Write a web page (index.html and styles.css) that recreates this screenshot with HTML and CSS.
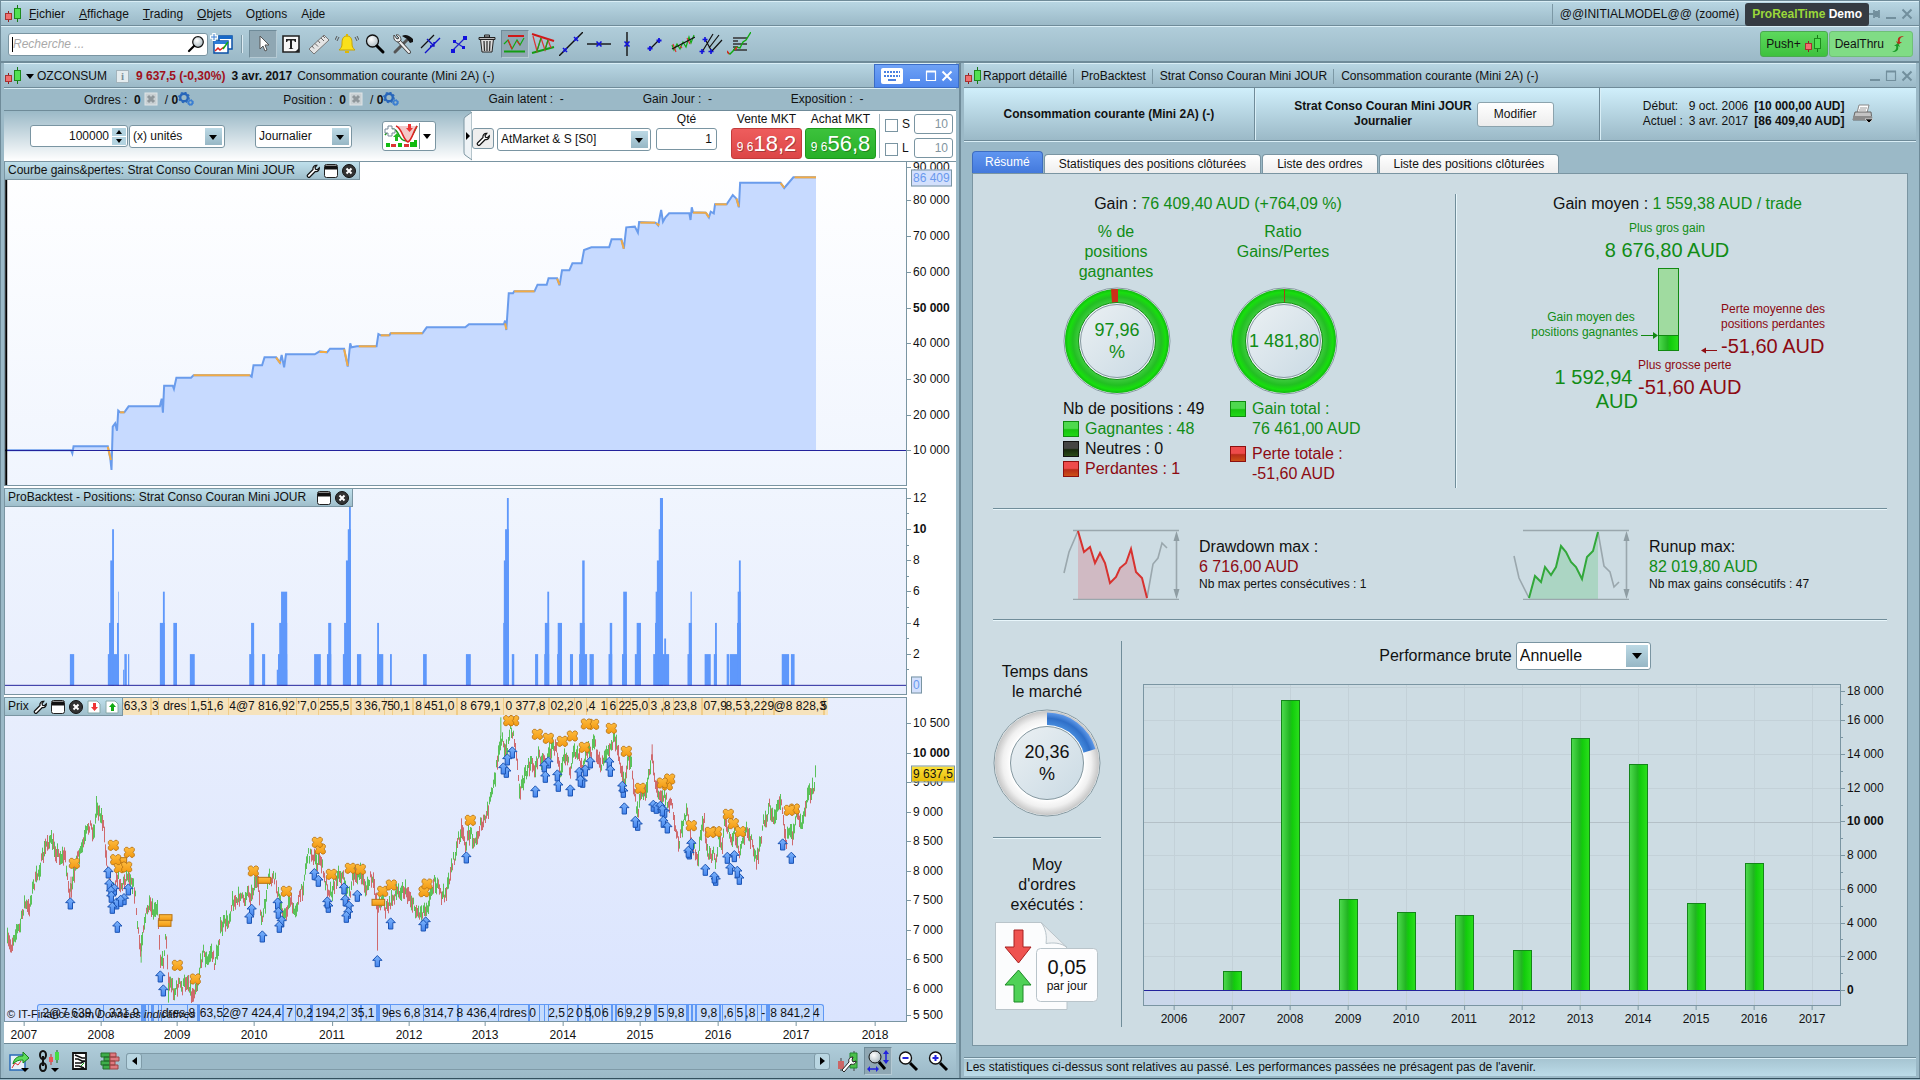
FILE: index.html
```html
<!DOCTYPE html>
<html lang="fr">
<head>
<meta charset="utf-8">
<title>ProRealTime Demo</title>
<link rel="stylesheet" href="styles.css">
</head>
<body>
<svg class="defs" aria-hidden="true">
  <defs>
    <linearGradient id="gBlue" x1="0" y1="0" x2="0" y2="1"><stop offset="0" stop-color="#7db4fb"/><stop offset="1" stop-color="#4484ee"/></linearGradient>
    <linearGradient id="gOrange" x1="0" y1="0" x2="0" y2="1"><stop offset="0" stop-color="#fdbb3f"/><stop offset="1" stop-color="#f39a12"/></linearGradient>
    <linearGradient id="gBar" x1="0" y1="0" x2="1" y2="0"><stop offset="0" stop-color="#4fdb4f"/><stop offset="0.45" stop-color="#22b522"/><stop offset="0.6" stop-color="#12cc0c"/><stop offset="1" stop-color="#2be01c"/></linearGradient>
    <radialGradient id="gRing" gradientUnits="userSpaceOnUse" cx="54" cy="54" r="52"><stop offset="0.7" stop-color="#48d048"/><stop offset="0.85" stop-color="#22bf22"/><stop offset="0.94" stop-color="#17df0d"/><stop offset="1" stop-color="#12b812"/></radialGradient>
    <radialGradient id="gRingW" gradientUnits="userSpaceOnUse" cx="54" cy="54" r="52"><stop offset="0.7" stop-color="#ffffff"/><stop offset="0.85" stop-color="#f0f0f0"/><stop offset="1" stop-color="#c6c6c6"/></radialGradient>
    <radialGradient id="gRingB" gradientUnits="userSpaceOnUse" cx="54" cy="54" r="52"><stop offset="0.7" stop-color="#4a90e0"/><stop offset="0.86" stop-color="#2f6fc8"/><stop offset="1" stop-color="#6ea6f2"/></radialGradient>
    <linearGradient id="gHole" x1="0" y1="0" x2="1" y2="1"><stop offset="0.15" stop-color="#e6edf1"/><stop offset="0.9" stop-color="#cddce5"/></linearGradient>
    <radialGradient id="gLens" cx="0.4" cy="0.35" r="0.7"><stop offset="0" stop-color="#fff"/><stop offset="1" stop-color="#a9b8bf"/></radialGradient>
    <symbol id="i-candles" viewBox="0 0 18 18"><path d="M4.500 6v11" stroke="#8d2020"/><rect x="1.500" y="8.500" width="6" height="6" fill="#f07070" stroke="#a83232"/><path d="M13.500 0v17" stroke="#167a16"/><rect x="10.500" y="3.500" width="6" height="10" fill="#52e052" stroke="#1d8a1d"/></symbol>
    <symbol id="i-wrench" viewBox="0 0 14 14"><path d="M1.500 11 7 5.500C6.500 3 8.500 1 10.800 1.300L9 3.500l.5 1.800 1.900.4 1.900-1.900c.3 2.600-1.700 4.200-4 3.700L3.600 13.200c-1.300.8-3-.9-2.100-2.200z" fill="#fff" stroke="#111" stroke-width="1.200"/></symbol>
    <symbol id="i-win" viewBox="0 0 14 14"><rect x=".5" y=".5" width="13" height="13" rx="2" fill="#fff" stroke="#222"/><path d="M1 1.500h12v4H1z" fill="#111"/></symbol>
    <symbol id="i-close" viewBox="0 0 14 14"><circle cx="7" cy="7" r="6.500" fill="#333" stroke="#111"/><path d="m4.500 4.500 5 5m0-5-5 5" stroke="#fff" stroke-width="2"/></symbol>
    <symbol id="i-greybox" viewBox="0 0 14 14"><rect x="1" y="1" width="12" height="12" fill="#c9d0d3" stroke="#dfe5e7"/><path d="m4 4 6 6m0-6-6 6" stroke="#8f979b" stroke-width="3"/></symbol>
    <symbol id="i-gears" viewBox="0 0 16 14"><circle cx="6" cy="5.500" r="3.800" fill="none" stroke="#2866ba" stroke-width="2.400"/><circle cx="6" cy="5.500" r="5.200" fill="none" stroke="#2866ba" stroke-width="1.300" stroke-dasharray="2 2.080"/><circle cx="12.500" cy="10.500" r="2" fill="none" stroke="#3c7fd2" stroke-width="1.700"/><circle cx="12.500" cy="10.500" r="3" fill="none" stroke="#3c7fd2" stroke-dasharray="1.200 1.150"/></symbol>
    <symbol id="i-min" viewBox="0 0 12 12"><path d="M1 10h10" stroke="currentColor" stroke-width="2"/></symbol>
    <symbol id="i-max" viewBox="0 0 12 12"><path d="M1.500 1.500h9v9h-9z" fill="none" stroke="currentColor" stroke-width="1.200"/><path d="M1 1.500h10" stroke="currentColor" stroke-width="2"/></symbol>
    <symbol id="i-x" viewBox="0 0 12 12"><path d="m1.500 1.500 9 9m0-9-9 9" stroke="currentColor" stroke-width="2"/></symbol>
    <symbol id="i-loupe" viewBox="0 0 24 24"><circle cx="9.500" cy="9" r="6" fill="url(#gLens)" stroke="#111" stroke-width="1.300"/><path d="m14 14 6 6" stroke="#000" stroke-width="3" stroke-linecap="round"/></symbol>
    <symbol id="m-arrow" viewBox="0 0 31 37" overflow="visible"><path d="M15.500 1.500 29.500 16H22v19H9V16H1.500z" fill="url(#gBlue)" stroke="#1d55b4" stroke-width="3"/></symbol>
    <symbol id="m-cross" viewBox="0 0 32 32" overflow="visible"><path d="M5 1h6l5 5 5-5h6l4 4v6l-4 5 4 5v6l-4 4h-6l-5-5-5 5H5l-4-4v-6l4-5-4-5V5z" fill="url(#gOrange)" stroke="#b87414" stroke-width="2.500"/></symbol>
  </defs>
</svg>

<header class="app-head">
  <div class="menubar">
    <svg class="logo"><use href="#i-candles"/></svg>
    <nav class="menus">
      <a href="#"><u>F</u>ichier</a><a href="#"><u>A</u>ffichage</a><a href="#"><u>T</u>rading</a><a href="#"><u>O</u>bjets</a><a href="#">O<u>p</u>tions</a><a href="#">A<u>i</u>de</a>
    </nav>
    <span class="model">@@INITIALMODEL@@ (zoomé)</span>
    <span class="brand"><b class="lime">ProRealTime</b> <b>Demo</b></span>
    <span class="winbtns dim">
      <button aria-label="Épingler"><svg viewBox="0 0 12 12"><path d="M0 6h5M5 2v8M6 4h3M6 8h3M6 5h3v2H6zM10 2v8" stroke="currentColor" stroke-width="1.800"/></svg></button>
      <button aria-label="Réduire"><svg><use href="#i-min"/></svg></button>
      <button aria-label="Fermer"><svg><use href="#i-x"/></svg></button>
    </span>
  </div>
  <div class="toolbar">
    <label class="search"><input type="text" placeholder="Recherche ..." aria-label="Recherche"><svg viewBox="0 0 18 18"><circle cx="11" cy="7" r="5.300" fill="url(#gLens)" stroke="#111" stroke-width="1.200"/><path d="m7 11-5 5" stroke="#000" stroke-width="2.200" stroke-linecap="round"/></svg></label>
    <button class="tool" aria-label="Nouvelle fenêtre"><svg viewBox="0 0 24 24"><path d="M9 4h13v13H9z" fill="#fff" stroke="#0a50a8" stroke-width="1.500"/><path d="M9 4h13v3H9z" fill="#1769c8"/><path d="M4 9h14v12H4z" fill="#fff" stroke="#0a50a8" stroke-width="1.500"/><path d="M4 9h14v3H4z" fill="#2b7bd8"/><path d="m5 19 3-3 2 2 4-3" stroke="#d22" fill="none" stroke-width="1.500"/><path d="m13 17 5-7" stroke="#1a1" stroke-width="1.500"/><path d="M4 1v8M0 5h8" stroke="#fff" stroke-width="3.500"/><path d="M4 2v6M1 5h6" stroke="#3b7fd0" stroke-width="1"/></svg></button>
    <span class="vsep"></span>
    <button class="tool on" aria-label="Sélection"><svg viewBox="0 0 24 24"><path d="M9 4v13l3-3 2 5 2-1-2-5h4z" fill="#fff" stroke="#555"/></svg></button>
    <button class="tool" aria-label="Texte"><svg viewBox="0 0 24 24"><path d="M4 4h16v16H4z" fill="#f6f6f6" stroke="#222" stroke-width="1.600"/><path d="M7 7h10v3h-1l-1-1.500h-2V16l1.500 1h-5l1.500-1V8.500H9L8 10H7zM16 20l4-4v4z" fill="#222"/></svg></button>
    <button class="tool" aria-label="Règle"><svg viewBox="0 0 24 24"><path d="m2 17 15-14 5 5L7 22z" fill="#e4e4e4" stroke="#777"/><path d="m5 14 2 2.500m1-5 3 3m0-6 2 2.500m1-5 3 3m-1-5 2 2" stroke="#666"/></svg></button>
    <button class="tool" aria-label="Alerte"><svg viewBox="0 0 24 24"><path d="M12 4c-5 0-5 5-5 8s-1 4-3 6h16c-2-2-3-3-3-6s0-8-5-8z" fill="#fae01c" stroke="#c9a400"/><path d="M10 19h4v2h-4zM11 2h2v2h-2z" fill="#e0b800"/><path d="M4 5 2 9m20 0-2-4M2 4 0 8m24 0-2-4" stroke="#555" fill="none"/></svg></button>
    <button class="tool" aria-label="Zoom"><svg><use href="#i-loupe"/></svg></button>
    <button class="tool" aria-label="Outils"><svg viewBox="0 0 24 24"><path d="m4 20 12-12" stroke="#555" stroke-width="3" stroke-linecap="round"/><path d="M11 4c3-2 7-1 11 3v3l-3 1-3-4z" fill="#111"/><path d="m7 8 11 12" stroke="#444" stroke-width="4" stroke-linecap="round"/><path d="m7 8 11 12" stroke="#eee" stroke-width="2.200" stroke-linecap="round"/><path d="M3 3c-1 4 1 7 5 7l2-2c0-4-3-6-5-5l3 3-2 1z" fill="#eee" stroke="#444"/></svg></button>
    <button class="tool" aria-label="Canal"><svg viewBox="0 0 24 24"><path d="M2 16 15 3" stroke="#111" stroke-width="1.200"/><path d="M6 21 21 6M8 7l7 7m0-4v4h-4" stroke="#11c" stroke-width="1.400" fill="none"/></svg></button>
    <button class="tool" aria-label="Droite"><svg viewBox="0 0 24 24"><path d="M6 18 18 6M8 10l8 5" stroke="#22c" stroke-width="1.200"/><path d="M4 17h4v4H4zM16 4h4v4h-4zM6 8h3v3H6zM15 14h3v3h-3z" fill="#11d"/></svg></button>
    <button class="tool" aria-label="Supprimer"><svg viewBox="0 0 24 24"><path d="M5.500 7h13l-1.500 13H7z" fill="#ddd" stroke="#222"/><path d="M4 5.500h16v2H4zM9.500 3h5v2h-5z" fill="#bbb" stroke="#222"/><path d="m9 9 .5 10M12 9v10m3-10-.5 10" stroke="#333" stroke-width="1.300"/></svg></button>
    <button class="tool on" aria-label="Supports"><svg viewBox="0 0 24 24"><path d="M5 4h16" stroke="#d01818" stroke-width="2"/><path d="M1 19.500h21" stroke="#139c13" stroke-width="2"/><path d="m1 12 4-4 4 9 5-9 3 5 4-7" fill="none" stroke="#1a1" stroke-width="1.200"/><path d="m5 8 4 9m5-8 3 4" stroke="#d22" stroke-width="1.200"/></svg></button>
    <button class="tool" aria-label="Triangle"><svg viewBox="0 0 24 24"><path d="m1 2 22 7" stroke="#d01818" stroke-width="2"/><path d="m1 21 22-6" stroke="#139c13" stroke-width="2"/><path d="m2 4 4 15 4-13 4 12 3-10 3 8" fill="none" stroke="#d33" stroke-width="1.200"/><path d="m6 19 4-13m4 12 3-10" stroke="#1a1" stroke-width="1.200"/></svg></button>
    <button class="tool" aria-label="Tendance"><svg viewBox="0 0 24 24"><path d="M0 24 24 0" stroke="#111" stroke-width="1.400"/><path d="m4 16 4 4m0-4-4 4M15 5l4 4m0-4-4 4" stroke="#11d" stroke-width="1.600"/></svg></button>
    <button class="tool" aria-label="Horizontale"><svg viewBox="0 0 24 24"><path d="M0 12h24" stroke="#111" stroke-width="1.400"/><path d="m9.500 9.500 5 5m0-5-5 5" stroke="#11d" stroke-width="1.600"/></svg></button>
    <button class="tool" aria-label="Verticale"><svg viewBox="0 0 24 24"><path d="M12 0v24" stroke="#111" stroke-width="1.400"/><path d="m9.500 9.500 5 5m0-5-5 5" stroke="#11d" stroke-width="1.600"/></svg></button>
    <button class="tool" aria-label="Segment"><svg viewBox="0 0 24 24"><path d="m7 17 9-9" stroke="#111" stroke-width="1.300"/><path d="M7 14v5m-2.500-2.500h5M16 6v5m-2.500-2.500h5" stroke="#11d" stroke-width="1.800"/></svg></button>
    <button class="tool" aria-label="Régression"><svg viewBox="0 0 24 24"><path d="m1 13 2 5 3-6 3 5 3-7 3 5 3-10 2 6 3-8" fill="none" stroke="#1a1" stroke-width="1.200"/><path d="m2 12 3 8m4-6 2 2m5-10 3 6" stroke="#d33" stroke-width="1.200"/><path d="M1 17 24 5" stroke="#111" stroke-width="1.200"/></svg></button>
    <button class="tool" aria-label="Fourchette"><svg viewBox="0 0 24 24"><path d="M3 20 14 2M10 16 20 3m-8 17L23 8M6 7l6 11" stroke="#111" stroke-width="1.200"/><path d="M6 5v5M3.500 7.500h5M3 17v5M.500 19.500h5m6.500-2.500v5m-2.500-2.500h5" stroke="#11d" stroke-width="1.600"/></svg></button>
    <button class="tool" aria-label="Fibonacci"><svg viewBox="0 0 24 24"><path d="M6 6h14M6 9h5M6 12h14M6 15h5M6 18h14" stroke="#333" stroke-width="1.500"/><path d="m0 20 3 2 3-3 3-4 4 1 3-6 3-2 5-8" fill="none" stroke="#1a1" stroke-width="1.400"/><path d="m0 19 2 3m6-4 2-3" stroke="#d22" stroke-width="1.400"/></svg></button>
    <span class="fill"></span>
    <button class="push">Push+ <svg class="c18"><use href="#i-candles"/></svg></button>
    <button class="push thru">DealThru <svg class="c18" viewBox="0 0 18 18"><path d="M15 1c-5 0-7 2-6 6L7 6l2 4 4-3-2 0c-1-3 1-5 4-6z" fill="#b5301c"/><path d="M3 17c5 0 7-2 6-6l2 1-2-4-4 3 2 0c1 3-1 5-4 6z" fill="#1a9a2a"/></svg></button>
  </div>
</header>

<main class="desk">
  <section class="panel">
    <div class="titlebar">
      <svg class="logo"><use href="#i-candles"/></svg>
      <span class="tri"></span>
      <span class="sym">OZCONSUM</span>
      <span class="info">i</span>
      <b class="loss">9 637,5 (-0,30%)</b>
      <b>3 avr. 2017</b>
      <span class="fill">Consommation courante (Mini 2A) (-)</span>
      <span class="winbtns blue">
        <button aria-label="Clavier" class="kbd"><svg viewBox="0 0 22 16"><rect width="22" height="16" rx="2" fill="#fff"/><path d="M3 4h16M3 8h16" stroke="#4a80e0" stroke-width="2" stroke-dasharray="2 1"/><path d="M7 12h8" stroke="#4a80e0" stroke-width="2"/></svg></button>
        <button aria-label="Réduire"><svg><use href="#i-min"/></svg></button>
        <button aria-label="Agrandir"><svg><use href="#i-max"/></svg></button>
        <button aria-label="Fermer"><svg><use href="#i-x"/></svg></button>
      </span>
    </div>
    <div class="status">
      <span>Ordres : &nbsp;<b>0</b> <svg class="c14"><use href="#i-greybox"/></svg> &nbsp;/ <b>0</b><svg class="c16"><use href="#i-gears"/></svg></span>
      <span>Position : &nbsp;<b>0</b> <svg class="c14"><use href="#i-greybox"/></svg> &nbsp;/ <b>0</b><svg class="c16"><use href="#i-gears"/></svg></span>
      <span>Gain latent : &nbsp;-</span>
      <span>Gain Jour : &nbsp;-</span>
      <span>Exposition : &nbsp;-</span>
    </div>
    <div class="controls">
      <div class="left-ctl">
        <span class="spin"><input class="box num" value="100000" aria-label="Nombre d'unités"><i class="up"></i><i class="down"></i></span>
        <span class="pick w95"><select aria-label="Unité"><option>(x) unités</option></select></span>
        <span class="pick w96"><select aria-label="Période"><option>Journalier</option></select></span>
        <button class="indic" aria-label="Indicateurs"><svg viewBox="0 0 36 26"><path d="M2 12c6-8 10-8 14 0s10 10 18-9" fill="none" stroke="#1c9c1c" stroke-width="1.500"/><path d="M13 3c6 2 7 14 12 16 4-2 5-10 9-16" fill="#f3c9c9" stroke="#d22" stroke-width="1.500"/><path d="M3 20h4v4H3zM15 20h4v4h-4zM27 19h4v5h-4zM31 17h3v7h-3z" fill="#1b1"/><path d="M8 21h5v3H8zM21 21h5v3h-5z" fill="#d33"/><path d="M25 1h3v4h2l-3.500 4L23 5h2z" fill="#e33"/><path d="m14 10 3 4h-2v4h-3v-4h-2z" fill="#2b2"/><path d="M2 6h3V3h4v3h3v4H9v3H5v-3H2z" fill="#fff" stroke="#789"/></svg><span class="tri"></span></button>
      </div>
      <div class="order">
        <svg class="notch" viewBox="0 0 9 50" preserveAspectRatio="none"><path d="M9 1 2 6q-1 1-1 3v32q0 2 1 3l7 5z" fill="#eef3f6" stroke="#7d96a2"/><path d="m3 21 4 4-4 4z"/></svg>
        <button class="sq" aria-label="Réglages"><svg class="c14"><use href="#i-wrench"/></svg></button>
        <span class="pick w154"><select aria-label="Type d'ordre"><option>AtMarket &amp; S [S0]</option></select></span>
        <label class="col qty">Qté<input class="box num" value="1"></label>
        <span class="col">Vente MKT<button class="mkt sell"><small>9 6</small>18,2</button></span>
        <span class="col">Achat MKT<button class="mkt buy"><small>9 6</small>56,8</button></span>
        <div class="sl">
          <label><input type="checkbox">S</label><input class="box num" value="10" aria-label="Stop">
          <label><input type="checkbox">L</label><input class="box num" value="10" aria-label="Limite">
        </div>
      </div>
    </div>
    <div class="charts">
      <div class="chart equity">
        <div class="plot"><svg class="area" viewBox="8 -54 1472 969" preserveAspectRatio="none" id="equity"></svg>
          <div class="tag"><span>Courbe gains&amp;pertes: Strat Conso Couran Mini JOUR</span><svg class="c14"><use href="#i-wrench"/></svg><svg class="c14"><use href="#i-win"/></svg><svg class="c14"><use href="#i-close"/></svg></div>
        </div>
        <div class="axis" id="axisEquity"></div>
      </div>
      <div class="chart pos">
        <div class="plot"><svg class="area" viewBox="8 27 1472 615" preserveAspectRatio="none" id="positions"></svg>
          <div class="tag"><span>ProBacktest - Positions: Strat Conso Couran Mini JOUR</span><svg class="c14"><use href="#i-win"/></svg><svg class="c14"><use href="#i-close"/></svg></div>
        </div>
        <div class="axis" id="axisPos"></div>
      </div>
      <div class="chart price">
        <div class="plot"><svg class="area" viewBox="15 24 2703 969" preserveAspectRatio="none" id="price"></svg>
          <div class="strip top" id="stripTop"></div>
          <div class="strip bottom" id="stripBottom"></div>
          <div class="tag">Prix<svg class="c14"><use href="#i-wrench"/></svg><svg class="c14"><use href="#i-win"/></svg><svg class="c14"><use href="#i-close"/></svg><svg class="c14" viewBox="0 0 14 14"><path d="M1 1h9l3 3v9H1z" fill="#fff" stroke="#8aa"/><path d="M6 3h3v4h2l-3.500 4L4 7h2z" fill="#e33"/></svg><svg class="c14" viewBox="0 0 14 14"><path d="M1 1h9l3 3v9H1z" fill="#fff" stroke="#8aa"/><path d="M6 11h3V7h2L7.500 3 4 7h2z" fill="#1a1"/></svg></div>
          <div class="copy">© IT-Finance.com <i>Données indicatives</i></div>
        </div>
        <div class="axis" id="axisPrice"></div>
      </div>
      <div class="years" id="years"></div>
    </div>
    <div class="footbar">
      <button class="tool" aria-label="Partager"><svg viewBox="0 0 24 24"><path d="M3 6h15v15H3z" fill="#e9f2fb" stroke="#2a6bb8" stroke-width="1.500"/><path d="m5 19 3-5 3 2 3-4" stroke="#d33" fill="none"/><path d="M6 15c1-6 5-8 10-8V3l6 6-6 5v-3c-5 0-7 1-10 4z" fill="#5ddc5d" stroke="#178017"/><path d="m14 19 8 0-4 4z"/></svg></button>
      <button class="tool" aria-label="Lier"><svg viewBox="0 0 24 24"><ellipse cx="6" cy="6" rx="3" ry="4" fill="none" stroke="#111" stroke-width="2"/><ellipse cx="6" cy="18" rx="3" ry="4" fill="none" stroke="#111" stroke-width="2"/><path d="M6 7v10" stroke="#111" stroke-width="2"/><path d="M14 5v11" stroke="#b33"/><path d="M12 8h4v5h-4z" fill="#e55"/><path d="M20 1v13" stroke="#161"/><path d="M18 3h4v8h-4z" fill="#4d4"/><path d="M14 19h8l-4 4z"/></svg></button>
      <button class="tool" aria-label="Liste"><svg viewBox="0 0 24 24"><path d="M6 4h13v16H6z" fill="#fff" stroke="#111" stroke-width="1.800"/><path d="m8 6 7 3h3M8 10h3l4 2h3M8 14h6l4-2M8 17h4l5 2" stroke="#111" stroke-width="1.600" fill="none"/><path d="m14 17 3-3" stroke="#1a1"/></svg></button>
      <button class="tool" aria-label="Carnet"><svg viewBox="0 0 24 24"><path d="M4 4h9v4H4zM7 8h6v4H7zM4 12h9v4H4zM6 16h7v4H6z" fill="#3fae4a" stroke="#216e2b"/><path d="M13 4h6v4h-6zM13 8h9v4h-9zM13 12h5v4h-5zM13 16h8v4h-8z" fill="#e07a80" stroke="#944"/></svg></button>
      <div class="scroll"><button aria-label="Gauche"><span class="tri l"></span></button><button aria-label="Droite"><span class="tri r"></span></button></div>
      <button class="tool" aria-label="Style"><svg viewBox="0 0 24 24"><path d="M5 9v13M18 2v20" stroke="#444"/><path d="M2 12h6v8H2z" fill="#c66"/><path d="M14 4h7v15h-7z" fill="#4bc04b" stroke="#283"/><path d="m6 21 7-8c-1-3 1-5 4-5l-1 3 1 2 3-1c0 3-3 4-5 3l-7 8z" fill="#fff" stroke="#222"/></svg></button>
      <button class="tool on" aria-label="Zoom auto"><svg viewBox="0 0 24 24"><circle cx="9" cy="8" r="6" fill="url(#gLens)" stroke="#111"/><path d="m13 13 6 7" stroke="#000" stroke-width="3"/><path d="M20 4v9M3 20h7" stroke="#22d" stroke-width="1.500"/><path d="m17 5 3-4 3 4zm0 6 3 4 3-4zM4 17l-3 3 3 3zm6 0 3 3-3 3z" fill="#22d"/></svg></button>
      <button class="tool" aria-label="Zoom arrière"><svg viewBox="0 0 24 24"><circle cx="9.500" cy="9" r="6" fill="#fff" stroke="#111" stroke-width="1.400"/><path d="m14 14 7 7" stroke="#000" stroke-width="3"/><path d="M6.500 9h6" stroke="#22d" stroke-width="2"/></svg></button>
      <button class="tool" aria-label="Zoom avant"><svg viewBox="0 0 24 24"><circle cx="9.500" cy="9" r="6" fill="#fff" stroke="#111" stroke-width="1.400"/><path d="m14 14 7 7" stroke="#000" stroke-width="3"/><path d="M6.500 9h6M9.500 6v6" stroke="#22d" stroke-width="2"/></svg></button>
    </div>
  </section>

  <section class="panel">
    <div class="titlebar">
      <svg class="logo"><use href="#i-candles"/></svg>
      <span class="crumb">Rapport détaillé</span><span class="crumb">ProBacktest</span><span class="crumb">Strat Conso Couran Mini JOUR</span><span class="crumb fill">Consommation courante (Mini 2A) (-)</span>
      <span class="winbtns dim">
        <button aria-label="Réduire"><svg><use href="#i-min"/></svg></button>
        <button aria-label="Agrandir"><svg><use href="#i-max"/></svg></button>
        <button aria-label="Fermer"><svg><use href="#i-x"/></svg></button>
      </span>
    </div>
    <div class="summary">
      <div><b>Consommation courante (Mini 2A) (-)</b></div>
      <div><b class="mid">Strat Conso Couran Mini JOUR<br>Journalier</b><button class="modify">Modifier</button></div>
      <div><span class="dates"><span>Début:</span><span>9 oct. 2006</span><b>[10 000,00 AUD]</b><span>Actuel :</span><span>3 avr. 2017</span><b>[86 409,40 AUD]</b></span>
        <svg class="printer" viewBox="0 0 22 20"><path d="M7 1h10l-2 8H5z" fill="#fff" stroke="#888"/><path d="M8 4h7M7 6h7" stroke="#999"/><path d="M3 8h16l1 8H1z" fill="#c4c4c4" stroke="#666"/><path d="M1 12h19v4H1z" fill="#8c8c8c"/><path d="m13 15 8 0-4 4z" stroke="#fff" stroke-width=".6"/></svg></div>
    </div>
    <div class="tabs"><button class="sel">Résumé</button><button>Statistiques des positions clôturées</button><button>Liste des ordres</button><button>Liste des positions clôturées</button></div>
    <div class="report">
      <div class="sec gains">
        <div class="gl">
          <p class="lead">Gain : <span class="g">76 409,40 AUD (+764,09 %)</span></p>
          <div class="rings">
            <div>
              <p class="ttl g">% de<br>positions<br>gagnantes</p>
              <div class="ring"><svg viewBox="0 0 108 108"><circle cx="54" cy="54" r="53" fill="#eef4f6" stroke="#84979f"/><circle cx="54" cy="54" r="52" fill="url(#gRing)"/><path d="M48 2.300A52 52 0 0 1 55 2v14h-6z" fill="#cc2f1a"/><circle cx="54" cy="54" r="38.500" fill="#eef4f6" stroke="#148f14"/><circle cx="54" cy="54" r="36.500" fill="url(#gHole)" stroke="#84979f"/></svg><span class="g">97,96<br>%</span></div>
              <ul><li>Nb de positions : 49</li><li class="g"><i class="sw gr"></i>Gagnantes : 48</li><li><i class="sw bk"></i>Neutres : 0</li><li class="r"><i class="sw rd"></i>Perdantes : 1</li></ul>
            </div>
            <div>
              <p class="ttl g">Ratio<br>Gains/Pertes</p>
              <div class="ring"><svg viewBox="0 0 108 108"><circle cx="54" cy="54" r="53" fill="#eef4f6" stroke="#84979f"/><circle cx="54" cy="54" r="52" fill="url(#gRing)"/><path d="M54.500 2v14" stroke="#a8401a"/><circle cx="54" cy="54" r="38.500" fill="#eef4f6" stroke="#148f14"/><circle cx="54" cy="54" r="36.500" fill="url(#gHole)" stroke="#84979f"/></svg><span class="g">1 481,80</span></div>
              <ul class="two"><li class="g"><i class="sw gr"></i>Gain total :<br>76 461,00 AUD</li><li class="r"><i class="sw rd"></i>Perte totale :<br>-51,60 AUD</li></ul>
            </div>
          </div>
        </div>
        <div class="gr-col">
          <p class="lead">Gain moyen : <span class="g">1 559,38 AUD / trade</span></p>
          <div class="avg">
            <p class="best g">Plus gros gain<strong>8 676,80 AUD</strong></p>
            <div class="win g">Gain moyen des&nbsp;<br>positions gagnantes<strong>1 592,94&nbsp;<br>AUD</strong></div>
            <svg class="arr" viewBox="0 0 20 83"><path d="M3 67.500h13" stroke="#118811"/><path d="m15 64 5 3.500-5 3.500z" fill="#118811"/></svg>
            <svg class="gauge" viewBox="0 0 21 83"><rect x=".5" y=".5" width="20" height="82" fill="#a0dba0" stroke="#118a11"/><rect x=".5" y="67.500" width="20" height="15" fill="url(#gBar)" stroke="#118a11"/></svg>
            <svg class="arr2" viewBox="0 0 42 83"><path d="M24 82.500h14" stroke="#8f0f14"/><path d="m27 79.500-5 3 5 3z" fill="#8f0f14"/></svg>
            <div class="lose r">Perte moyenne des<br>positions perdantes<strong>-51,60 AUD</strong></div>
            <div class="worst r">Plus grosse perte<strong>-51,60 AUD</strong></div>
          </div>
        </div>
      </div>
      <div class="sec extremes">
        <div class="ext"><svg viewBox="0 0 118 72"><path d="M15 3 21 24 27 19 32 35 37 25 42 35 47 55 53 49 57 40 63 35 68 21 73 44 79 50 84 70V72H15z" fill="#d23" fill-opacity=".18"/><path d="M10 2.500h106M10 71.500h106M113.500 10v52" stroke="#9aa7ad" stroke-width="1.600"/><path d="m113.500 3 3 10h-6zm0 68 3-10h-6z" fill="#8f9da3"/><path d="M1 45 6 24 15 3M84 70l6-34 5-6 4-15 5 5" fill="none" stroke="#9aa7ad" stroke-width="1.600"/><path d="M15 3 21 24 27 19 32 35 37 25 42 35 47 55 53 49 57 40 63 35 68 21 73 44 79 50 84 70" fill="none" stroke="#d8322f" stroke-width="2"/></svg>
          <p>Drawdown max :<br><span class="r">6 716,00 AUD</span><small>Nb max pertes consécutives : 1</small></p></div>
        <div class="ext"><svg viewBox="0 0 118 72"><path d="M16 70 22 48 28 54 32 39 38 47 43 39 48 18 53 24 58 34 63 39 69 51 74 29 80 23 85 4V72H16z" fill="#2b4" fill-opacity=".2"/><path d="M10 2.500h106M10 71.500h106M113.500 10v52" stroke="#9aa7ad" stroke-width="1.600"/><path d="m113.500 3 3 10h-6zm0 68 3-10h-6z" fill="#8f9da3"/><path d="m1 28 5 22 10 20M85 4l6 34 6 6 4 15 5-5" fill="none" stroke="#9aa7ad" stroke-width="1.600"/><path d="M16 70 22 48 28 54 32 39 38 47 43 39 48 18 53 24 58 34 63 39 69 51 74 29 80 23 85 4" fill="none" stroke="#32a83a" stroke-width="2"/></svg>
          <p>Runup max:<br><span class="g">82 019,80 AUD</span><small>Nb max gains consécutifs : 47</small></p></div>
      </div>
      <div class="perf">
        <aside>
          <p>Temps dans&nbsp;<br>le marché</p>
          <div class="ring"><svg viewBox="0 0 108 108"><circle cx="54" cy="54" r="53" fill="#eef4f6" stroke="#84979f"/><circle cx="54" cy="54" r="52" fill="url(#gRingW)"/><path d="M54 3.500A50.500 50.500 0 0 1 102.500 40L91 43.500 54 54z" fill="url(#gRingB)"/><circle cx="54" cy="54" r="38" fill="#fff"/><circle cx="54" cy="54" r="36.500" fill="url(#gHole)" stroke="#84979f"/></svg><span>20,36<br>%</span></div>
          <hr>
          <p>Moy<br>d'ordres<br>exécutés :</p>
          <div class="daily"><svg viewBox="0 0 104 88"><path d="M.5.500H46L72 26v61.500H.5z" fill="#fbfcfd" stroke="#b9c4ca"/><path d="M46 .500c5 6 6 14 5 21 7-1 15-1 21 4z" fill="#eef1f3" stroke="#b9c4ca"/><path d="M19 8h9v17h8L23.500 41 10 25h9z" fill="#ef5350" stroke="#a82020"/><path d="M19 80h9V63h8L23.500 48 10 63h9z" fill="#4fd157" stroke="#1d8a26"/><rect x="41.500" y="26.500" width="61" height="53" rx="4" fill="#fdfdfe" stroke="#b9c4ca"/></svg><span>0,05<small>par jour</small></span></div>
        </aside>
        <div class="perf-main">
          <div class="perf-head"><label for="perf">Performance brute</label><span class="pick big"><select id="perf"><option>Annuelle</option></select></span></div>
          <div class="perf-chart">
            <div class="plot2"><svg class="area" viewBox="1144 685 696 320" preserveAspectRatio="none" id="perfBars"></svg></div>
            <div class="axis" id="axisPerf"></div>
            <div class="years" id="yearsPerf"></div>
          </div>
        </div>
      </div>
    </div>
    <div class="note">Les statistiques ci-dessus sont relatives au passé. Les performances passées ne présagent pas de l'avenir.</div>
  </section>
</main>
<footer class="edge"></footer>
<script src="charts.js"></script>
</body>
</html>
```
FILE: styles.css
```css
* { box-sizing: border-box; }
body { margin: 0; min-height: 100vh; display: flex; flex-direction: column; background: #9bb9c7; color: #111; font: 12px/15px "Liberation Sans", Arial, sans-serif; }
button, input, select { font: inherit; color: inherit; margin: 0; }
button { padding: 0; border: 0; background: none; }
p, ul { margin: 0; padding: 0; list-style: none; }
a { color: inherit; text-decoration: none; }
svg { display: block; flex: none; }
.defs { position: absolute; width: 0; height: 0; }
.fill { flex: 1; }
.g { color: #118c16; }
.r { color: #8c0a12; }
.logo { width: 18px; height: 18px; }
.c14 { width: 14px; height: 14px; }
.c16 { width: 16px; height: 14px; }
.c18 { width: 18px; height: 18px; }
.tri { width: 0; height: 0; border: 4px solid transparent; border-top: 5px solid #000; border-bottom: 0; }
.tri.l { border: 4px solid transparent; border-right: 5px solid #000; border-left: 0; }
.tri.r { border: 4px solid transparent; border-left: 5px solid #000; border-right: 0; }

.app-head { border: 1px solid #6f8b99; border-bottom: 2px solid #6f8b99; }
.menubar, .toolbar, .titlebar { display: flex; align-items: center; }
.menubar { height: 25px; padding: 1px 6px 0 3px; border-top: 1px solid #d9eef6; border-bottom: 1px solid #6f8b99; background: linear-gradient(#b8d6e3, #9bb9c7); }
.menus { display: flex; gap: 14px; flex: 1; padding-left: 7px; }
.model { border-left: 1px solid #7c98a5; padding: 2px 6px 2px 7px; line-height: 16px; }
.brand { background: #353b42; color: #fff; border-radius: 3px; height: 23px; line-height: 23px; padding: 0 7px; }
.lime { color: #9bd83a; }
.winbtns { display: flex; gap: 4px; align-items: center; padding-left: 3px; }
.menubar .winbtns { padding-left: 0; gap: 4px; }
.winbtns button { width: 12px; height: 12px; }
.winbtns svg { width: 12px; height: 12px; }
.dim { color: #728f9d; }
.toolbar { height: 35px; padding: 0 6px 0 7px; border-top: 1px solid #d9eef6; background: linear-gradient(#b0cdda, #9bb9c7); }
.search { display: flex; align-items: center; width: 200px; height: 23px; background: #fff; border: 1px solid #7a95a2; border-radius: 3px; padding: 0 2px 0 3px; }
.search input { flex: 1; min-width: 0; border: 0; outline: 0; padding: 0; font-style: italic; border-left: 1px solid #000; height: 15px; }
.search input::placeholder { color: #a9a9a9; }
.search svg { width: 18px; height: 18px; }
.tool { width: 28px; height: 28px; display: grid; place-items: center; flex: none; }
.tool svg { width: 24px; height: 24px; }
.tool.on { background: #8fa7b3; border: 1px solid #b5cad4; border-top-color: #6f8b99; border-left-color: #6f8b99; }
.vsep { width: 1px; height: 18px; margin: 0 6px; background: #dcebf2; box-shadow: -1px 0 #7c98a5; }
.push { display: flex; align-items: center; gap: 3px; height: 26px; padding: 0 5px; background: linear-gradient(#5dd85d, #3ec23e); border: 1px solid #4aa94f; border-radius: 3px; margin-left: 1px; }
.thru { background: #80dc85; border-color: #6fc077; gap: 5px; }

.desk { flex: 1; display: grid; grid-template-columns: 1fr 1fr; }
.panel { display: flex; flex-direction: column; min-width: 0; padding: 0 3px; border: solid #6f8b99; border-width: 0 1px; }
.titlebar { height: 25px; padding: 1px 3px 0 0; border-top: 1px solid #d9eef6; border-bottom: 1px solid #6f8b99; background: linear-gradient(#b8d6e3, #9bb9c7); }
.titlebar > .tri { margin: 0 3px 0 4px; }
.sym { margin-right: 9px; }
.info { width: 13px; height: 13px; background: #e4ecef; border: 1px solid #a3b4bc; color: #7b8f99; font: bold 11px/11px "Liberation Serif", serif; text-align: center; margin-right: 7px; }
.loss { color: #a0101c; margin-right: 6px; }
.titlebar b + .fill { padding-left: 5px; }
.blue { height: 24px; padding: 0 5px 0 6px; color: #fff; background: linear-gradient(#6fa2f6, #4f87ec); border: 1px solid #3b6dc6; margin: -1px -6px 0 0; }
.winbtns .kbd, .winbtns .kbd svg { width: 22px; height: 16px; }
.winbtns .kbd { margin-right: 2px; }
.crumb { padding: 0 6px 0 7px; }
.crumb:nth-child(2) { padding-left: 1px; }
.crumb + .crumb { border-left: 1px solid #7c98a5; }
.status { display: grid; grid-template-columns: 199fr 205fr 154fr 148fr 165fr; align-items: center; height: 23px; padding-left: 80px; border-bottom: 1px solid #6f8b99; border-top: 1px solid #d9eef6; }
.status svg { display: inline-block; vertical-align: -2px; }
.controls { display: flex; height: 51px; background: linear-gradient(#9bb9c7, #fff); border-bottom: 1px solid #7a95a2; }
.left-ctl { display: flex; align-items: center; flex: 1; padding-left: 26px; }
.box { height: 22px; width: 61px; border: 1px solid #7a95a2; border-radius: 3px; background: #fff; padding: 0 4px; }
.num { text-align: right; }
.spin { position: relative; margin-right: 1px; }
.spin .box { width: 98px; padding-right: 18px; }
.spin i { position: absolute; right: 2px; width: 14px; height: 8px; background: #b3d3e0; }
.spin i::after { content: ""; position: absolute; left: 4px; top: 2px; border: 3px solid transparent; }
.up { top: 3px; } .down { top: 12px; }
.spin .up::after { border-bottom: 4px solid #000; border-top: 0; }
.spin .down::after { border-top: 4px solid #000; border-bottom: 0; }
.pick { position: relative; display: inline-block; }
.pick select { appearance: none; width: 100%; height: 23px; border: 1px solid #7a95a2; border-radius: 3px; background: #fff; padding: 0 20px 0 3px; }
.pick::before { content: ""; position: absolute; right: 3px; top: 3px; width: 17px; height: 17px; background: linear-gradient(#bcd9e5, #97b7c5); pointer-events: none; }
.pick::after { content: ""; position: absolute; right: 8px; top: 10px; border: 4px solid transparent; border-top: 5px solid #000; border-bottom: 0; pointer-events: none; }
.w95 { width: 96px; margin-right: 30px; }
.w96 { width: 97px; margin-right: 30px; }
.w154 { width: 154px; margin-top: 17px; }
.indic { display: flex; align-items: center; width: 54px; height: 30px; border: 1px solid #7a95a2; border-radius: 3px; background: #fff; }
.indic svg { width: 37px; height: 26px; border-right: 1px solid #7a95a2; }
.indic .tri { margin-left: 3px; }
.order { display: flex; align-items: flex-start; background: linear-gradient(90deg, transparent 8px, #fff 8px); padding-right: 3px; }
.notch { width: 9px; height: 50px; }
.sq { width: 22px; height: 21px; margin: 17px 3px 0 0; display: grid; place-items: center; border: 1px solid #7a95a2; border-radius: 3px; background: #eee; }
.col { display: flex; flex-direction: column; align-items: center; padding-top: 1px; margin-left: 3px; }
.qty { margin: 0 11px 0 5px; }
.qty .box { margin-top: 1px; }
.mkt { width: 71px; height: 31px; margin-top: 1px; border-radius: 3px; color: #fff; font-size: 22px; line-height: 30px; white-space: nowrap; text-shadow: 1px 1px #0004; }
.mkt small { font-size: 12px; }
.sell { background: linear-gradient(#ee5d5d, #dc4646); border: 1px solid #c23c3c; }
.buy { background: linear-gradient(#3cc23c, #28b028); border: 1px solid #1d9a1d; }
.sl { display: grid; grid-template-columns: 29px 39px; gap: 4px 0; margin: 3px 0 0 3px; padding-left: 5px; border-left: 1px solid #9fb2bb; align-items: center; }
.sl label { display: flex; align-items: center; gap: 4px; }
.sl input[type=checkbox] { appearance: none; width: 13px; height: 13px; margin: 3px 0 0; border: 1px solid #7a95a2; background: #fff; }
.sl .box { width: 39px; height: 20px; color: #8295a0; }

.charts { flex: 1; display: flex; flex-direction: column; gap: 2px; background: #fff; min-height: 700px; }
.chart { display: flex; min-height: 0; }
.equity { flex: 324 1 0; } .pos { flex: 207 1 0; } .price { flex: 325 1 0; }
.plot { position: relative; flex: 1; min-width: 0; border: 1px solid #7a95a2; overflow: hidden; }
.equity .plot { border-top: 0; background: linear-gradient(#fff, #f0f5fe); }
.pos .plot { background: linear-gradient(#f0f5fe, #e8eefd); }
.price .plot { background: linear-gradient(#e8eefd, #dae4fe); }
.area { position: absolute; inset: 0; width: 100%; height: 100%; }
.tag { position: absolute; left: 0; top: 0; display: flex; align-items: center; gap: 4px; height: 18px; padding: 0 3px; background: linear-gradient(#bfe0ec, #9fbecb); border: 1px solid #7a95a2; border-width: 0 1px 1px 0; white-space: nowrap; }
.tag span { margin-right: 7px; }
.axis { position: relative; width: 49px; overflow: hidden; flex: none; }
.axis span { position: absolute; left: 6px; transform: translateY(-50%); white-space: nowrap; }
.axis i { position: absolute; left: 0; width: 4px; height: 1px; background: #7a95a2; }
.axis i.minor { width: 2px; }
.axis .chip { left: 4px; padding: 0 1px; border: 1px solid #7a95a2; background: #d3e0fc; color: #6a99ee; }
.axis .now { background: linear-gradient(#fbe03a, #e9bd08); color: #111; }
.years { position: relative; height: 19px; flex: none; margin-right: 49px; }
.years span { position: absolute; top: 4px; transform: translateX(-50%); }
.years span::before { content: ""; position: absolute; left: 50%; top: -6px; width: 1px; height: 4px; background: #7a95a2; }
.strip { position: absolute; height: 17px; overflow: hidden; white-space: nowrap; }
.strip.top { left: 12%; right: 8.700%; top: 0; background: #f6e3bd; }
.strip.bottom { left: 3.600%; right: 9.100%; bottom: 0; background: #c5dbfd; border: 1px solid #5f98f5; border-bottom: 0; border-radius: 3px 3px 0 0; }
.strip span { position: absolute; top: 1px; }
.strip i { position: absolute; top: 0; bottom: 0; background: #5f98f5; }
.strip.top i { background: #f0cc88; }
.copy { position: absolute; left: 2px; bottom: 0; font-size: 11px; line-height: 13px; }
.footbar { display: flex; align-items: center; height: 35px; padding: 0 4px 0 1px; border-top: 1px solid #6f8b99; background: linear-gradient(#b0cdda, #9bb9c7); gap: 2px; }
.scroll { flex: 1; display: flex; justify-content: space-between; height: 17px; margin: 0 2px 0 1px; border: 1px solid #7f9ba8; border-radius: 3px; background: #9bb9c7; }
.scroll button { width: 16px; display: grid; place-items: center; background: #b9d6e2; border: 1px solid #7f9ba8; border-radius: 3px; margin: -1px; }
.edge { height: 2px; border-top: 1px solid #33515f; background: #9bb9c7; }

.summary { display: grid; grid-template-columns: 290fr 346fr 317fr; height: 53px; border-bottom: 1px solid #6f8b99; box-shadow: 0 1px #d9eef6; background: linear-gradient(#d0effb, #9bb9c7); }
.summary > div { display: flex; align-items: center; justify-content: center; gap: 5px; }
.summary > div:nth-child(2) { padding-right: 6px; }
.summary > div + div { border-left: 1px solid #6f8b99; box-shadow: inset 1px 0 #d9eef6; }
.mid { text-align: center; }
.modify { width: 77px; height: 25px; background: linear-gradient(#fff, #ececec); border: 1px solid #8ca3ad; border-radius: 3px; }
.dates { display: grid; grid-template-columns: auto auto auto; column-gap: 6px; }
.printer { width: 22px; height: 20px; margin-left: 2px; }
.tabs { display: flex; align-items: flex-end; gap: 1px; margin: 10px 0 0 8px; height: 22px; }
.tabs button { height: 19px; padding: 0 14px; background: linear-gradient(#fff, #eee); border: 1px solid #7a95a2; border-bottom: 0; border-radius: 4px 4px 0 0; }
.tabs .sel { height: 22px; padding: 0 12px; color: #fff; background: linear-gradient(#5f95f0, #4379dc); border-color: #3d6cc0; }
.report { flex: 1; margin: 0 8px; padding: 0 20px; background: #cddce3; border: 1px solid #7a95a2; font-size: 16px; line-height: 20px; }
.sec { border-bottom: 1px solid #708d9a; box-shadow: 0 1px #e8f6fb; }
.gains { display: grid; grid-template-columns: 462fr 432fr; padding: 20px 0 20px; min-height: 335px; }
.gr-col { border-left: 1px solid #708d9a; box-shadow: inset 1px 0 #e8f6fb; }
.lead { text-align: center; }
.gl .lead { padding-right: 12px; }
.gr-col .lead { padding-left: 12px; }
.rings { display: flex; gap: 22px; padding: 8px 0 0 70px; }
.rings > div { width: 145px; }
.ttl { width: 106px; height: 65px; text-align: center; }
.ring { position: relative; width: 108px; height: 108px; }
.ring svg { width: 108px; height: 108px; }
.ring span { position: absolute; inset: 0; display: grid; place-content: center; text-align: center; font-size: 18px; line-height: 22px; white-space: nowrap; }
.rings ul { margin-top: 4px; white-space: nowrap; }
.rings li { position: relative; }
.rings li:has(.sw) { padding-left: 22px; }
.two li + li { margin-top: 5px; }
.sw { position: absolute; left: 0; top: 2px; width: 16px; height: 16px; border: 1px solid; }
.sw.gr { background: linear-gradient(#4ed94e 45%, #18c410 55%, #20d818); border-color: #118a11; }
.sw.bk { background: linear-gradient(#444 45%, #16280c 55%, #2a4a18); border-color: #111; }
.sw.rd { background: linear-gradient(#ee4b4b 45%, #b82c18 55%, #cc5018); border-color: #8c1010; }
.avg { display: grid; grid-template-columns: 182px 20px 21px 42px 1fr; grid-template-rows: auto 83px auto; font-size: 12px; line-height: 15px; }
.avg strong { display: block; font-size: 20px; font-weight: 400; line-height: 24px; }
.best { grid-column: 1 / 6; width: 422px; text-align: center; padding-top: 7px; }
.best strong { line-height: 28px; margin-bottom: 4px; }
.win { grid-area: 2 / 1 / 4 / 2; text-align: right; padding-top: 42px; }
.win strong { margin-top: 25px; }
.arr, .gauge, .arr2 { grid-row: 2; height: 83px; overflow: visible; }
.lose { grid-row: 2; padding-top: 34px; white-space: nowrap; }
.lose strong { line-height: 28px; }
.worst { grid-area: 3 / 2 / 4 / 6; justify-self: start; padding-top: 7px; }
.worst strong { line-height: 28px; }
.extremes { display: grid; grid-template-columns: 450fr 444fr; padding: 19px 0; height: 111px; }
.ext { display: flex; gap: 18px; padding-left: 70px; }
.ext svg { width: 118px; height: 72px; }
.ext p { padding-top: 9px; }
.ext small { display: block; font-size: 12px; line-height: 15px; }
.perf { display: grid; grid-template-columns: 129px 1fr; padding-top: 21px; }
aside { border-right: 1px solid #708d9a; padding: 21px 20px 0 0; height: 386px; text-align: center; }
aside .ring { margin-top: 7px; }
aside hr { margin: 20px 0 17px; border: 0; border-top: 1px solid #708d9a; box-shadow: 0 1px #e8f6fb; height: 1px; }
.daily { position: relative; margin: 7px 0 0 2px; }
.daily svg { width: 104px; height: 88px; }
.daily span { position: absolute; left: 41px; top: 33px; width: 62px; font-size: 20px; line-height: 24px; }
.daily small { display: block; font-size: 12px; line-height: 15px; }
.perf-main { padding-left: 21px; }
.perf-head { display: flex; align-items: center; justify-content: center; gap: 4px; height: 29px; }
.big { width: 135px; }
.big select { height: 28px; }
.big::before { width: 22px; height: 22px; }
.big::after { top: 11px; right: 9px; border-width: 6px 5px 0; }
.perf-chart { display: grid; grid-template-columns: 1fr 49px; margin: 14px -3px 0 0; font-size: 12px; line-height: 15px; }
.plot2 { position: relative; height: 322px; border: 1px solid #7a95a2; }
.perf-chart .years { grid-column: 1; margin: 0; }
.perf-chart .years span { top: 6px; }
.note { margin: 11px 0 2px; padding: 2px; height: 19px; line-height: 15px; border-top: 1px solid #6f8b99; box-shadow: inset 0 1px #d9eef6; background: linear-gradient(#a5c3d0, #bcdce9); }
```
FILE: charts.js
```js
const NS = 'http://www.w3.org/2000/svg';
const $ = id => document.getElementById(id);
function add(parent, tag, attrs) {
  const e = document.createElementNS(NS, tag);
  for (const k in attrs) e.setAttribute(k, attrs[k]);
  parent.appendChild(e);
  return e;
}

/* Equity curve */
const eq = [[8,811],[116,811],[118,820],[120,799],[176,799],[180,835],[182,870],[184,740],[188,730],[191,752],[193,692],[196,697],[203,697],[210,679],[261,679],[264,656],[266,698],[268,617],[282,617],[284,627],[288,593],[312,593],[316,586],[408,586],[411,590],[414,556],[428,556],[432,532],[451,532],[457,548],[460,525],[464,562],[467,523],[514,523],[522,514],[534,517],[539,506],[562,506],[568,560],[572,490],[574,502],[583,499],[615,499],[618,462],[622,466],[636,466],[638,460],[690,460],[697,442],[760,442],[766,433],[823,433],[825,422],[827,450],[831,340],[838,340],[840,334],[873,334],[878,314],[893,314],[896,295],[910,295],[914,316],[918,271],[930,271],[935,250],[950,250],[954,210],[966,202],[995,202],[999,178],[1015,178],[1019,206],[1023,142],[1037,140],[1042,158],[1044,126],[1071,128],[1075,136],[1080,90],[1083,125],[1087,112],[1093,100],[1126,100],[1128,120],[1130,82],[1132,97],[1153,98],[1158,112],[1161,95],[1166,100],[1168,73],[1187,73],[1197,45],[1203,56],[1207,82],[1209,8],[1275,8],[1281,24],[1296,-8],[1333,-8]];
const eqSvg = $('equity');
const pts = eq.map(p => p.join()).join(' ');
add(eqSvg, 'polygon', { points: pts + ' 1333,811 8,811', fill: '#c7daff' });
const ve = { fill: 'none', 'vector-effect': 'non-scaling-stroke', 'stroke-width': 2 };
add(eqSvg, 'polyline', { ...ve, points: pts, stroke: '#6a9cec' });
[[316,408,586],[622,636,466],[638,690,460],[586,614,499],[840,873,334],[1046,1070,128],[1132,1153,98],[1168,1187,73],[1298,1333,-8],[196,203,697],[522,534,516]]
  .forEach(s => add(eqSvg, 'path', { ...ve, d: `M${s[0]} ${s[2]}H${s[1]}`, stroke: '#f2ab45' }));
['M176 800L181 840','M562 508L568 558','M451 533L458 550','M910 296L914 314','M1015 180L1019 206','M1203 56L1207 80','M1275 9L1281 23','M1153 98L1158 112','M1072 130L1077 136','M825 430L827 448']
  .forEach(d => add(eqSvg, 'path', { ...ve, d, stroke: '#f2ab45' }));
add(eqSvg, 'path', { ...ve, 'stroke-width': 1, d: 'M8 811.500H1480', stroke: '#23239c' });
add(eqSvg, 'path', { ...ve, d: 'M10 -54V915', stroke: '#000' });

/* Open positions: [from, to, count] */
const held = [[114,121,2],[176,194,2],[178,186,4],[180,186,8],[183,186,10],[191,194,4],[193,194,6],[201,203,1],[203,207,2],[209,211,2],[261,269,4],[266,269,6],[283,289,4],[310,318,2],[407,415,2],[410,415,4],[428,433,2],[452,469,1],[454,469,2],[456,469,4],[459,469,6],[513,524,2],[534,541,2],[536,541,4],[560,573,2],[562,573,4],[565,573,8],[568,573,10],[570,573,12],[583,590,2],[616,626,2],[616,619,4],[637,640,2],[691,697,2],[761,769,2],[822,831,4],[823,831,8],[825,831,10],[828,831,12],[836,840,2],[874,879,2],[889,897,2],[890,897,4],[894,897,6],[910,918,2],[911,918,4],[931,936,2],[946,959,2],[947,955,4],[951,955,8],[963,970,2],[994,1000,2],[996,1000,4],[1016,1024,2],[1018,1024,6],[1037,1047,2],[1040,1047,4],[1067,1093,2],[1070,1083,4],[1071,1083,6],[1073,1083,8],[1076,1083,10],[1078,1083,12],[1085,1088,3],[1123,1130,2],[1125,1130,4],[1128,1130,6],[1151,1161,2],[1166,1171,2],[1168,1171,4],[1187,1191,2],[1192,1210,2],[1204,1210,4],[1205,1210,6],[1207,1210,8],[1277,1289,2],[1292,1298,2]];
held.forEach(([a, b, n]) => add($('positions'), 'rect', { x: a, y: 616 - n * 46.83, width: b - a, height: n * 46.83, fill: '#5f98fb' }));
add($('positions'), 'path', { ...ve, 'stroke-width': 1, d: 'M8 616H1480', stroke: '#23239c' });

/* Price candles, noise seeded so that each load draws the same series */
const path3 = [20,750,32,770,45,725,58,715,72,640,85,660,98,590,110,560,125,510,140,455,155,455,165,480,180,500,195,500,205,600,213,610,225,520,240,490,255,440,268,400,280,430,290,350,300,370,308,400,316,490,325,560,340,590,352,560,365,590,380,550,395,570,405,620,412,720,420,780,430,700,445,650,460,670,472,660,480,800,488,820,497,730,505,880,513,880,522,910,535,880,545,895,558,870,566,880,574,920,585,890,595,860,607,780,622,820,632,780,642,820,652,780,660,720,672,700,685,690,697,630,710,640,720,610,730,640,740,600,752,620,765,570,775,600,784,700,795,640,805,570,825,570,835,620,845,660,855,680,868,620,880,670,895,630,908,590,920,500,935,490,950,520,962,510,972,570,985,600,998,600,1012,550,1028,560,1045,630,1055,570,1070,550,1085,560,1098,600,1110,565,1122,590,1132,660,1145,620,1155,660,1170,640,1185,610,1197,600,1210,600,1225,610,1240,650,1255,670,1270,660,1285,640,1300,570,1310,590,1325,620,1340,600,1355,520,1365,500,1375,440,1385,430,1395,465,1410,425,1425,460,1438,410,1450,400,1460,370,1470,330,1485,260,1495,170,1505,140,1512,190,1520,180,1530,110,1540,140,1548,190,1558,300,1570,270,1585,230,1595,220,1605,240,1615,190,1625,210,1640,210,1655,165,1668,180,1680,240,1690,190,1705,210,1710,260,1720,190,1732,180,1745,230,1760,170,1772,190,1783,150,1790,200,1800,230,1815,190,1830,180,1842,140,1852,190,1862,230,1872,280,1885,200,1893,210,1902,320,1913,370,1923,300,1935,320,1945,250,1955,190,1965,290,1980,310,1995,320,2005,350,2012,330,2022,400,2037,460,2050,380,2060,370,2072,450,2082,480,2092,510,2102,430,2112,390,2120,490,2130,500,2140,470,2146,520,2155,440,2164,480,2172,400,2182,410,2190,460,2202,430,2215,490,2222,480,2240,410,2252,450,2268,520,2278,470,2288,400,2298,390,2306,340,2320,400,2330,350,2342,320,2348,400,2358,450,2368,420,2375,440,2390,370,2405,395,2420,320,2432,300,2440,300,2446,245];
let seed = 7;
const rnd = () => (seed = (seed * 16807) % 2147483647) / 2147483647;
const up = [], down = [];
let k = 0, prev = path3[1];
for (let x = 21; x <= 2446; x += 3) {
  while (path3[k + 2] < x) k += 2;
  const t = (x - path3[k]) / (path3[k + 2] - path3[k]);
  const y = path3[k + 1] + t * (path3[k + 3] - path3[k + 1]) + (rnd() - 0.5) * 30;
  const h = 16 + rnd() * 34;
  ((y < prev) === (rnd() > 0.2) ? up : down).push(`M${x + 1.5} ${(y - h / 2).toFixed()}v${h.toFixed()}`);
  prev = y;
}
down.push('M1132.500 640V782', 'M1384.500 385V440', 'M1956.500 163V200', 'M213 560V625');
up.push('M289.500 318V360', 'M423.500 760V818', 'M505.500 860V938', 'M1502.500 82V140');
const pr = $('price');
add(pr, 'path', { d: up.join(''), stroke: '#5ac25a', 'stroke-width': 3 });
add(pr, 'path', { d: down.join(''), stroke: '#cf6a6e', 'stroke-width': 3 });

[[370,512,20],[497,683,38],[494,700,38],[793,571,38],[1135,637,38]].forEach(([x, y, w]) =>
  add(pr, 'rect', { x: x - w / 2, y: y - 9, width: w, height: 18, fill: 'url(#gOrange)', stroke: '#b87414', 'stroke-width': 3 }));
const crosses = [223,520,340,466,358,533,347,509,380,531,388,487,532,826,586,867,760,543,859,604,961,477,952,457,994,553,1081,538,1051,535,1148,604,1174,585,1272,605,1281,582,1411,391,1541,92,1526,92,1612,133,1645,145,1687,154,1717,138,1753,172,1781,103,1759,102,1834,115,1879,184,1921,295,2002,285,2009,267,1987,279,2074,407,2149,425,2131,427,2185,373,2200,401,2221,425,2383,357,2368,361];
for (let i = 0; i < crosses.length; i += 2) add(pr, 'use', { href: '#m-cross', x: crosses[i] - 16, y: crosses[i + 1] - 16, width: 32, height: 32 });
const arrows = [211,640,325,547,343,598,328,584,333,605,334,620,385,598,350,640,372,627,362,632,337,653,352,710,481,859,490,901,755,659,748,683,787,739,833,640,835,668,845,694,838,710,943,552,955,572,985,650,982,637,1032,595,1036,631,1047,650,1045,668,1039,680,1072,617,1132,813,1172,700,1277,697,1270,706,1399,502,1537,187,1522,208,1519,245,1510,235,1606,304,1645,217,1633,229,1636,260,1672,256,1675,287,1711,301,1738,248,1756,241,1748,275,1741,272,1771,217,1828,218,1831,242,1870,305,1867,290,1873,355,1913,404,1906,395,1960,347,1969,353,1981,350,1994,365,1987,361,1990,395,2002,412,2074,462,2068,490,2065,485,2116,539,2147,569,2143,562,2182,503,2203,498,2191,536,2218,566,2212,545,2348,463,2374,503];
for (let i = 0; i < arrows.length; i += 2) add(pr, 'use', { href: '#m-arrow', x: arrows[i] - 15.5, y: arrows[i + 1] - 18, width: 31, height: 37 });

/* Order labels, left edges in pixels of a 903px wide plot */
function strip(el, start, width, texts, bars) {
  const pc = v => ((v - start) / width * 100).toFixed(2) + '%';
  el.innerHTML = bars.map(([x, w]) => `<i style="left:${pc(x)};width:${w}px"></i>`).join('') +
    texts.map(([x, t]) => `<span style="left:${pc(x)}">${t}</span>`).join('');
}
strip($('stripTop'), 113, 714, [[117,'263,3'],[152,'3'],[163,'dres'],[190,'1,51,6'],[229,'4@7 816,9'],[288,'2'],[297,'’7,0'],[319,'255,5'],[355,'3'],[364,'36,7'],[387,'5'],[393,'0,1'],[415,'8'],[424,'451,0'],[460,'8 679,1'],[505,'0 377,8'],[550,'02,2'],[575,'0'],[585,',4'],[600,'1'],[609,'6'],[618,'2'],[624,'2'],[631,'5,0'],[650,'3'],[660,',8'],[673,'23,8'],[703,'07,9'],[725,'8,5'],[743,'3,2'],[760,'2'],[767,'9'],[773,'@8 828,3'],[820,'5']],
  [[150,2],[158,1],[188,1],[208,1],[228,1],[286,1],[296,1],[318,1],[350,2],[364,1],[384,1],[392,1],[412,2],[424,1],[456,2],[503,1],[548,2],[574,1],[586,1],[606,2],[616,2],[622,1],[630,1],[648,2],[662,1],[672,1],[700,2],[724,1],[744,2],[762,1],[772,2],[822,2]]);
strip($('stripBottom'), 37, 788, [[41,'2@7 639,0'],[108,'331,9'],[161,'dres 8'],[199,'63,5'],[222,'2@7 424,4'],[286,'7'],[296,'0,2'],[315,'194,2'],[351,'35,1'],[382,'9es'],[404,'6,8'],[424,'314,7'],[457,'8 436,4'],[500,'rdres'],[530,'0'],[549,'2,5'],[568,'2'],[577,'0'],[586,'5'],[592,',0'],[603,'6'],[618,'6'],[627,'9,2'],[646,'9'],[659,'5'],[669,'9,8'],[702,'9,8'],[725,',6'],[738,'5'],[747,',8'],[763,'-'],[772,'8 841,2'],[815,'4']],
  [[102,1],[140,5],[147,1],[150,3],[157,1],[160,1],[186,1],[196,3],[222,1],[282,2],[295,1],[310,3],[347,1],[360,2],[376,4],[390,1],[423,1],[457,2],[499,1],[529,2],[540,1],[545,1],[549,1],[568,1],[578,2],[586,1],[590,2],[603,1],[612,2],[616,2],[626,1],[646,1],[655,3],[668,1],[687,3],[692,2],[696,2],[721,2],[724,1],[737,1],[747,2],[759,1],[763,1],[768,4],[815,1]]);

/* Axes: values are pixels along a plot of the given top and height */
function axis(el, top, height, items, minors) {
  const pc = v => ((v - top) / height * 100).toFixed(2) + '%';
  const bold = t => t === '50 000' || t === '10' || (t === '10 000' && el.id !== 'axisEquity') || (t === '0' && el.id === 'axisPerf');
  el.innerHTML = (minors || []).map(y => `<i class="minor" style="top:${pc(y)}"></i>`).join('') +
    items.map(([y, t, c]) => (c ? '' : `<i style="top:${pc(y)}"></i>`) +
      `<span class="${c || ''}" style="top:${pc(y)}">${!c && bold(t) ? `<b>${t}</b>` : t}</span>`).join('');
}
axis($('axisEquity'), 162, 324, [...[9,8,7,6,5,4,3,2,1].map(n => [486 - n * 35.7 + (n > 8 ? 2 : 0), n + '0 000']), [178, '86 409', 'chip']]);
axis($('axisPos'), 488, 207, [...[12,10,8,6,4,2].map(n => [685 - n * 15.6, String(n)]), [685, '0', 'chip']], [1,3,5,7,9,11].map(n => 685 - n * 15.6));
axis($('axisPrice'), 697, 325, [...[10500,10000,9500,9000,8500,8000,7500,7000,6500,6000,5500].map((v, i) => [Math.min(723 + i * 29.55, 1015), v.toLocaleString('fr-FR').replace(/\s/g, ' ')]), [774, '9 637,5', 'chip now']]);
axis($('axisPerf'), 684, 322, [18,16,14,12,10,8,6,4,2,0].map(n => [Math.max(990 - n * 16.85, 691), n ? n + ' 000' : '0']), [1,3,5,7,9,11,13,15,17].map(n => 990 - n * 16.85));

function years(el, first, xs, left, width) {
  el.innerHTML = xs.map((x, i) => `<span style="left:${((x - left) / width * 100).toFixed(2)}%">${first + i}</span>`).join('');
}
years($('years'), 2007, [24,101,177,254,332,409,485,563,640,718,796,875], 4, 903);
years($('yearsPerf'), 2006, Array.from({ length: 12 }, (_, i) => 1174 + i * 58), 1143, 698);

/* Yearly performance */
const pb = $('perfBars');
add(pb, 'rect', { x: 1144, y: 990, width: 696, height: 15, fill: '#cad7ea' });
for (let i = 0; i < 12; i++) add(pb, 'path', { d: `M${1174.5 + i * 58} 685V1005`, stroke: '#c3d1d8', 'stroke-width': 1 });
for (let n = 2; n <= 18; n += 2) add(pb, 'path', { d: `M1144 ${Math.round(990 - n * 16.85) + 0.5}H1840`, stroke: n === 10 ? '#b4c0c7' : '#c3d1d8', 'stroke-width': 1 });
[971,700,899,912,915,950,738,764,903,863].forEach((y, i) =>
  add(pb, 'rect', { x: 1223.5 + i * 58, y: y + 0.5, width: 18, height: 990 - y, fill: 'url(#gBar)', stroke: '#14861a' }));
add(pb, 'path', { d: 'M1144 990.500H1840', stroke: '#23239c' });
```
